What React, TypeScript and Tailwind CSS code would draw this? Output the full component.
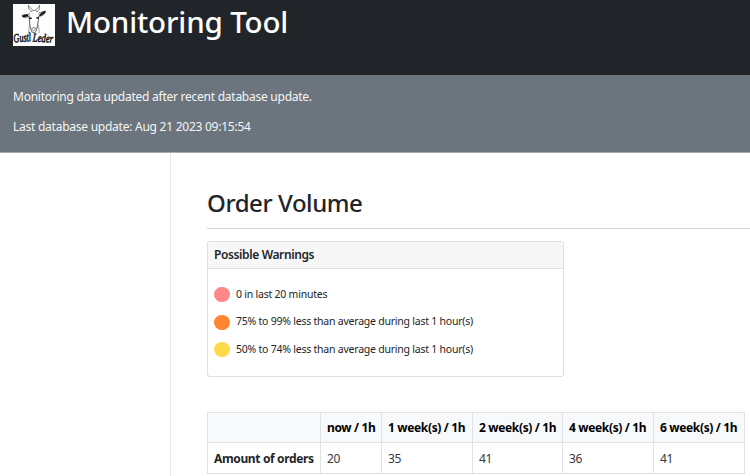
const warnings = [
  { color: 'bg-[#ff8787]', text: '0 in last 20 minutes' },
  { color: 'bg-[#ff8533]', text: '75% to 99% less than average during last 1 hour(s)' },
  { color: 'bg-[#ffda4a]', text: '50% to 74% less than average during last 1 hour(s)' },
];

const columns = [
  { label: 'now / 1h', value: 20 },
  { label: '1 week(s) / 1h', value: 35 },
  { label: '2 week(s) / 1h', value: 41 },
  { label: '4 week(s) / 1h', value: 36 },
  { label: '6 week(s) / 1h', value: 41 },
];

function Logo() {
  return (
    <svg className="mt-1 h-[42px] w-[42px] shrink-0" viewBox="0 0 42 42" fill="none" stroke="#333" strokeWidth="0.8" strokeLinecap="round" strokeLinejoin="round">
      <rect width="42" height="42" fill="#fdfdfd" stroke="none" />
      <path d="M18 7.5C16 6 15 4 15.5 1.5M19.5 6C18.2 5 17.2 3 15.5 1.5M22.5 6C24.5 5 25.5 3 26.5 1.5M24.5 7.5C26.5 6 27 4 26.5 1.5" stroke="#666" />
      <path d="M18 7.5C19.5 6 22.5 6 24.5 7.5" stroke="#777" />
      <path d="M16 12C16.2 16 16.8 18 16.8 21C17 23 18 24 18 25.5C18.5 28 19.5 28.5 21 28.5C22.8 28.5 23.5 27 23.7 25C24.5 23 25 19 25.8 12" />
      <path d="M16.5 10C13.5 11.2 11 10 9.2 11.5C10.5 14.2 14 13.5 16 12.2" />
      <path d="M26 9C28.5 9 29.5 7.4 32.4 7C32 10 29.5 12.5 26.3 12" />
      <path d="M10.2 12.2L14.2 11.6M27.2 11L31.4 8.2" stroke="#111" strokeWidth="2" />
      <path d="M16.6 14.2L18.2 14.3M24 14L25.4 13.7" stroke="#111" strokeWidth="1.4" />
      <path d="M18.8 24.5C19.5 23.3 22 23.3 22.9 24.5M19.7 25.8L20.8 26.5L22 25.8" strokeWidth="0.7" />
      <path d="M16.8 21C15.6 24 15.5 27 16 30M25 21C26.2 24 26.3 27 26 29" stroke="#777" strokeWidth="0.7" />
      <text x="0.8" y="38.6" textLength="17.5" lengthAdjust="spacingAndGlyphs" transform="rotate(-5 1 38)" fill="#111" stroke="#111" strokeWidth="0.55" className="font-['Liberation_Serif',serif] text-[12.5px] italic">Gustl</text>
      <text x="19.5" y="37.6" textLength="20.5" lengthAdjust="spacingAndGlyphs" transform="rotate(3 20 38)" fill="#111" stroke="#111" strokeWidth="0.55" className="font-['Liberation_Serif',serif] text-[12px] italic">Leder</text>
    </svg>
  );
}

export default function App() {
  return (
    <div className="flex h-[476px] w-[750px] flex-col overflow-hidden bg-white font-['Noto_Sans',sans-serif] text-[12px] text-[#212529]">
      <header className="flex h-[75px] shrink-0 gap-[11px] bg-[#212529] pl-[13px]">
        <Logo />
        <h1 className="mt-[3px] text-[29.5px] leading-[38px] font-medium tracking-[-0.15px] whitespace-nowrap text-white">Monitoring Tool</h1>
      </header>
      <div className="flex h-[78px] shrink-0 flex-col gap-3 border-b border-[#a5abb0] bg-[#6c757d] pt-[12.5px] pl-[13px] leading-[18px] whitespace-nowrap text-[#f4f5f6]">
        <p><span className="tracking-[-0.25px]">Monitoring data updated after recent database update.</span></p>
        <p><span className="tracking-[-0.25px]">Last database update: Aug 21 2023 09:15:54</span></p>
      </div>
      <div className="flex min-h-0 grow">
        <aside className="w-[171px] shrink-0 border-r border-[#e4e6e8]" />
        <main className="flex grow flex-col pl-[36px]">
          <h2 className="mt-[35px] h-[41px] shrink-0 border-b border-[#d3d4d4] text-[24px] leading-[30px] font-medium whitespace-nowrap"><span className="tracking-[-0.42px]">Order Volume</span></h2>
          <section className="mt-3 h-[136px] w-[357px] shrink-0 rounded-[3px] border border-[#dfdfdf]">
            <h3 className="h-[27px] rounded-t-[2px] border-b border-[#dfdfdf] bg-[#f7f7f7] pl-[6px] leading-[26px] font-semibold"><span className="tracking-[-0.38px]">Possible Warnings</span></h3>
            <ul className="flex flex-col gap-[12px] pt-[18px] pl-[6px] text-[10.5px]">
              {warnings.map((w) => (
                <li key={w.text} className="flex h-[15.5px] items-center gap-[6px] whitespace-nowrap">
                  <span className={`h-[15px] w-[16px] rounded-full ${w.color}`} />
                  <span className="tracking-[-0.23px]">{w.text}</span>
                </li>
              ))}
            </ul>
          </section>
          <table className="mt-[35px] w-[538px] table-fixed border-collapse text-left whitespace-nowrap">
            <colgroup>
              <col className="w-[113px]" />
              <col className="w-[61px]" />
              <col className="w-[91px]" />
              <col className="w-[90px]" />
              <col className="w-[91px]" />
              <col className="w-[91px]" />
            </colgroup>
            <thead className="bg-[#f8f9fb] text-black">
              <tr className="h-[30px]">
                <th className="border border-[#dee2e6]" />
                {columns.map((c) => (
                  <th key={c.label} className="border border-[#dee2e6] pt-px pl-[6px] font-bold"><span className="tracking-[-0.35px]">{c.label}</span></th>
                ))}
              </tr>
            </thead>
            <tbody>
              <tr className="h-[31px]">
                <th className="border border-[#dee2e6] pt-px pl-[6px] font-bold"><span className="tracking-[-0.36px]">Amount of orders</span></th>
                {columns.map((c) => (
                  <td key={c.label} className="border border-[#dee2e6] pt-px pl-[6px] text-[#343a40]"><span className="tracking-[-0.3px]">{c.value}</span></td>
                ))}
              </tr>
            </tbody>
          </table>
        </main>
      </div>
    </div>
  );
}
